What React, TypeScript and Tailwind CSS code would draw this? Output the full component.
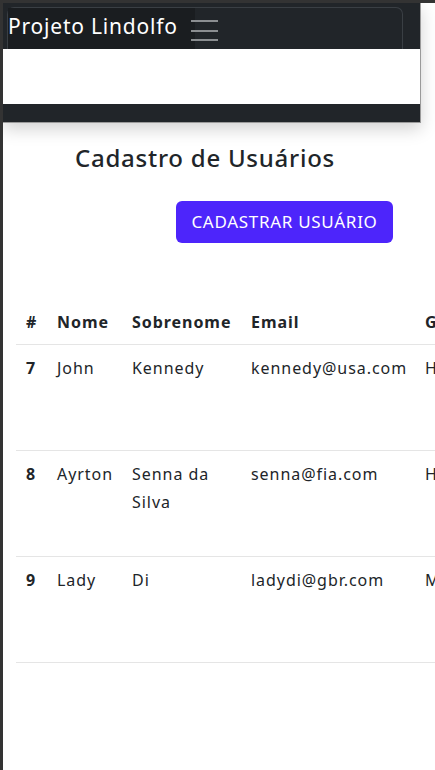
import React from "react";

const rows = [
  { id: 7, nome: "John", sobrenome: "Kennedy", email: "kennedy@usa.com", g: "Homem" },
  { id: 8, nome: "Ayrton", sobrenome: "Senna da Silva", email: "senna@fia.com", g: "Homem" },
  { id: 9, nome: "Lady", sobrenome: "Di", email: "ladydi@gbr.com", g: "Mulher" },
];

export default function App() {
  return (
    <div
      className="w-[435px] h-[770px] overflow-hidden bg-white border-l-[3px] border-t-[3px] border-[#333333] text-[#212529]"
      style={{ fontFamily: '"Noto Sans", "Open Sans", sans-serif' }}
    >
      <div className="w-[418px] border-r border-b border-[#9a9a9a] shadow-[0_6px_16px_rgba(0,0,0,0.18)]">
        <div className="h-[46px] bg-[#212529] pt-[4px] pl-[4px] pr-[17px]">
          <div className="h-full border border-b-0 border-[#3a3f44] rounded-t-[7px] flex items-stretch">
            <div className="w-[187px] bg-[#1a1d20] flex items-center pb-[4px]">
              <span className="text-white text-[21px] leading-none tracking-[0.8px]">Projeto Lindolfo</span>
            </div>
            <div className="ml-[-4px] flex flex-col gap-[7.5px] pt-[12px]">
              <div className="w-[27px] h-[2px] bg-[#8b8e91]" />
              <div className="w-[27px] h-[2px] bg-[#8b8e91]" />
              <div className="w-[27px] h-[2px] bg-[#8b8e91]" />
            </div>
          </div>
        </div>
        <div className="h-[55px] bg-white" />
        <div className="h-[18px] bg-[#212529]" />
      </div>

      <div className="pl-[72px] pt-[17px]">
        <h1 className="text-[24px] leading-[36px] font-medium tracking-[0.75px] text-[#212529]">Cadastro de Usuários</h1>
      </div>
      <div className="pl-[173px] pt-[25px]">
        <button className="w-[217px] h-[42px] rounded-[6px] bg-[#4d25fb] text-white text-[17px] tracking-[0.7px] uppercase">
          Cadastrar usuário
        </button>
      </div>

      <div className="pl-[13px] pt-[57px]">
        <table className="w-[600px] border-collapse text-[16px] tracking-[0.95px] table-fixed">
          <colgroup>
            <col className="w-[33px]" />
            <col className="w-[75px]" />
            <col className="w-[119px]" />
            <col className="w-[174px]" />
            <col className="w-[199px]" />
          </colgroup>
          <thead>
            <tr className="border-b border-[#e5e5e5]">
              <th className="text-left font-bold px-[8px] pt-[10px] pb-[10px] leading-[24px] pl-[10px]">#</th>
              <th className="text-left font-bold px-[8px] pt-[10px] pb-[10px] leading-[24px]">Nome</th>
              <th className="text-left font-bold px-[8px] pt-[10px] pb-[10px] leading-[24px]">Sobrenome</th>
              <th className="text-left font-bold px-[8px] pt-[10px] pb-[10px] leading-[24px]">Email</th>
              <th className="text-left font-bold px-[8px] pt-[10px] pb-[10px] leading-[24px]">Gênero</th>
            </tr>
          </thead>
          <tbody>
            {rows.map((r) => (
              <tr key={r.id} className="border-b border-[#e5e5e5] h-[106px] align-top">
                <td className="font-bold px-[8px] pl-[10px] pt-[10px] leading-[27.5px]">{r.id}</td>
                <td className="px-[8px] pt-[10px] leading-[27.5px]">{r.nome}</td>
                <td className="px-[8px] pt-[10px] leading-[27.5px]">{r.sobrenome}</td>
                <td className="px-[8px] pt-[10px] leading-[27.5px]">{r.email}</td>
                <td className="px-[8px] pt-[10px] leading-[27.5px]">{r.g}</td>
              </tr>
            ))}
          </tbody>
        </table>
      </div>
    </div>
  );
}
